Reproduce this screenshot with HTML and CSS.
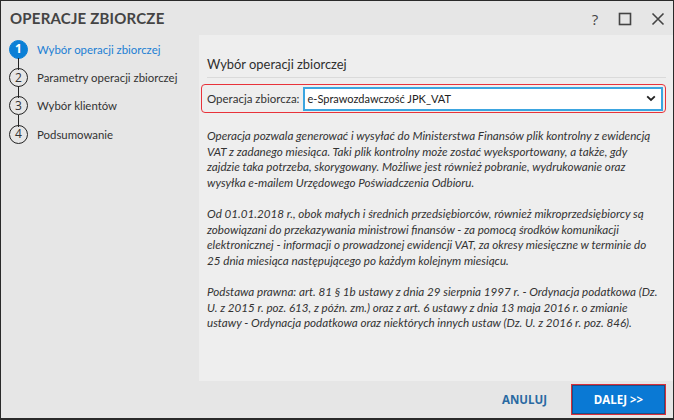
FILE: index.html
```html
<!DOCTYPE html>
<html lang="pl">
<head>
<meta charset="utf-8">
<title>Operacje zbiorcze</title>
<link rel="stylesheet" href="styles.css">
</head>
<body>
<div class="window">
  <header class="titlebar">
    <h1 class="title">OPERACJE ZBIORCZE</h1>
    <div class="controls">
      <span class="help">?</span>
      <svg class="ctl" width="14" height="14" viewBox="0 0 14 14"><rect x="1.5" y="1.5" width="11" height="11" fill="none" stroke="#444" stroke-width="1.6"/></svg>
      <svg class="ctl" width="14" height="14" viewBox="0 0 14 14"><path d="M1.5 1.5 L12.5 12.5 M12.5 1.5 L1.5 12.5" stroke="#444" stroke-width="1.6" fill="none"/></svg>
    </div>
  </header>
  <div class="main">
    <nav class="steps">
      <div class="step active"><span class="num">1</span><span class="label">Wybór operacji zbiorczej</span></div>
      <div class="step"><span class="num">2</span><span class="label">Parametry operacji zbiorczej</span></div>
      <div class="step"><span class="num">3</span><span class="label">Wybór klientów</span></div>
      <div class="step last"><span class="num">4</span><span class="label">Podsumowanie</span></div>
    </nav>
    <section class="panel">
      <h2 class="heading">Wybór operacji zbiorczej</h2>
      <div class="field">
        <label class="field-label">Operacja zbiorcza:</label>
        <div class="select">
          <span class="select-value">e-Sprawozdawczość JPK_VAT</span>
          <svg class="chev" width="10" height="7" viewBox="0 0 10 7"><path d="M1.2 1.3 L5 5 L8.8 1.3" fill="none" stroke="#222" stroke-width="1.8"/></svg>
        </div>
      </div>
      <div class="desc">
        <p>Operacja pozwala generować i wysyłać do Ministerstwa Finansów plik kontrolny z ewidencją<br>VAT z zadanego miesiąca. Taki plik kontrolny może zostać wyeksportowany, a także, gdy<br>zajdzie taka potrzeba, skorygowany. Możliwe jest również pobranie, wydrukowanie oraz<br>wysyłka e-mailem Urzędowego Poświadczenia Odbioru.</p>
        <p>Od 01.01.2018 r., obok małych i średnich przedsiębiorców, również mikroprzedsiębiorcy są<br>zobowiązani do przekazywania ministrowi finansów - za pomocą środków komunikacji<br>elektronicznej - informacji o prowadzonej ewidencji VAT, za okresy miesięczne w terminie do<br>25 dnia miesiąca następującego po każdym kolejnym miesiącu.</p>
        <p>Podstawa prawna: art. 81 § 1b ustawy z dnia 29 sierpnia 1997 r. - Ordynacja podatkowa (Dz.<br>U. z 2015 r. poz. 613, z późn. zm.) oraz z art. 6 ustawy z dnia 13 maja 2016 r. o zmianie<br>ustawy - Ordynacja podatkowa oraz niektórych innych ustaw (Dz. U. z 2016 r. poz. 846).</p>
      </div>
    </section>
  </div>
  <footer class="footer">
    <button class="btn-link">ANULUJ</button>
    <button class="btn-primary">DALEJ &gt;&gt;</button>
  </footer>
</div>
</body>
</html>
```

FILE: styles.css
```css
* { box-sizing: border-box; }
html, body { margin: 0; padding: 0; }
body {
  font-family: Lato, "Open Sans", sans-serif;
  color: #333;
  background: #fff;
}
.window {
  width: 674px;
  height: 420px;
  border: 1px solid #2a2a2a;
  border-bottom-width: 2px;
  background: #e6e6e6;
  display: flex;
  flex-direction: column;
}
.titlebar {
  height: 34px;
  flex: none;
  display: flex;
  align-items: center;
  justify-content: space-between;
  padding: 0 8px 0 9px;
  background: #e6e6e6;
}
.title {
  margin: 0;
  font-size: 15px;
  font-weight: 700;
  color: #444;
  letter-spacing: 0.2px;
}
.controls {
  display: flex;
  align-items: center;
  gap: 19px;
  padding-top: 1px;
}
.help {
  font-family: "Open Sans", sans-serif;
  font-size: 15px;
  color: #444;
  line-height: 14px;
  width: 12px;
  text-align: center;
  margin-right: -2px;
}
.ctl { display: block; }
.main {
  flex: 1;
  display: flex;
  min-height: 0;
}
.steps {
  width: 198px;
  flex: none;
  padding: 0 0 0 8px;
}
.step {
  position: relative;
  display: flex;
  align-items: center;
  height: 28.4px;
  gap: 9px;
}
.step::after {
  content: "";
  position: absolute;
  left: 8.5px;
  top: 23px;
  width: 1.5px;
  height: 12px;
  background: #222;
}
.step.last::after { display: none; }
.num {
  width: 19px;
  height: 19px;
  border-radius: 50%;
  border: 1.5px solid #222;
  display: flex;
  align-items: center;
  justify-content: center;
  font-family: "Open Sans", sans-serif;
  font-size: 12px;
  color: #333;
  flex: none;
  line-height: 1;
}
.step.active .num {
  background: #0a7fd6;
  border-color: #0a7fd6;
  color: #fff;
  font-weight: 700;
}
.label {
  font-size: 11.4px;
  color: #333;
}
.step.active .label { color: #1b7fd4; }
.panel {
  flex: 1;
  background: #eeeeee;
  padding: 19px 7px 0 2px;
}
.heading {
  margin: 0 0 0 6px;
  font-size: 12.9px;
  font-weight: 400;
  line-height: 20px;
  color: #2f2f2f;
  padding-bottom: 3px;
  border-bottom: 1px solid #dadada;
}
.field {
  margin-top: 6px;
  height: 29px;
  border: 1.5px solid #e8323a;
  border-radius: 4px;
  display: flex;
  align-items: center;
  padding: 0 2px 0 5px;
  gap: 4px;
}
.field-label {
  font-size: 11.5px;
  color: #333;
}
.select {
  flex: 1;
  height: 24px;
  border: 2px solid #3ba5e0;
  background: #fff;
  display: flex;
  align-items: center;
  justify-content: space-between;
  padding: 0 5px 0 2px;
}
.select-value {
  font-size: 11px;
  color: #222;
}
.chev { display: block; }
.desc {
  margin: 15px 0 0 6px;
  font-size: 11.65px;
  font-style: italic;
  line-height: 15.6px;
  color: #333;
  white-space: nowrap;
}
.desc p { margin: 0 0 15.6px 0; }
.footer {
  height: 37px;
  flex: none;
  display: flex;
  align-items: flex-start;
  justify-content: flex-end;
  padding: 3px 7px 0 0;
  gap: 24px;
}
.btn-link {
  border: none;
  background: none;
  font-family: "Open Sans", sans-serif;
  font-size: 11.5px;
  font-weight: 700;
  color: #2a6aa2;
  height: 31px;
  padding: 0;
}
.btn-primary {
  width: 95px;
  height: 31px;
  border: 1px solid #d8303a;
  box-shadow: inset 0 0 0 1px #1b4f86;
  background: #0a79d4;
  color: #fff;
  font-family: "Open Sans", sans-serif;
  font-size: 11.5px;
  font-weight: 700;
  padding: 0;
}
```
